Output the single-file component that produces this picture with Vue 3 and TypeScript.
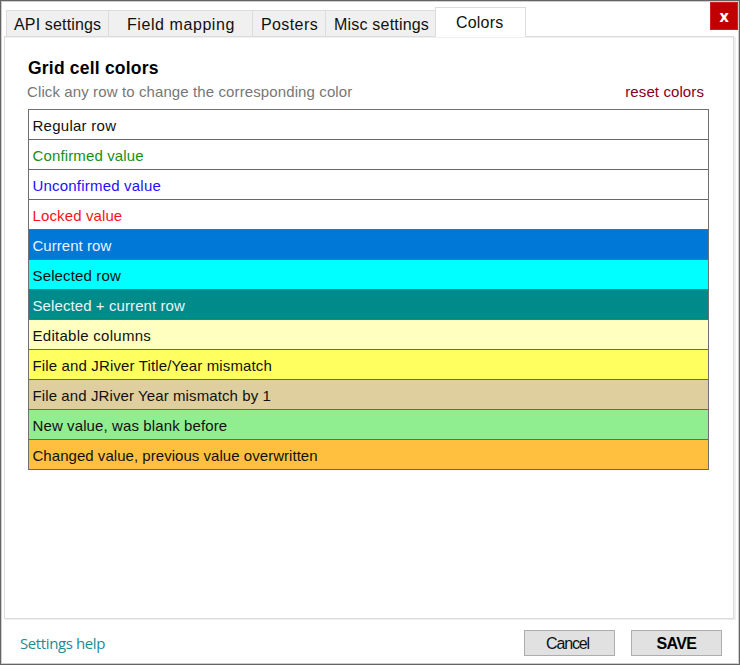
<script setup lang="ts">
import { ref } from 'vue'

interface Tab { id: string; label: string }
interface ColorRow { id: string; label: string }

const tabs: Tab[] = [
  { id: 'api', label: 'API settings' },
  { id: 'fields', label: 'Field mapping' },
  { id: 'posters', label: 'Posters' },
  { id: 'misc', label: 'Misc settings' },
  { id: 'colors', label: 'Colors' },
]
const active = ref('colors')

const rows: ColorRow[] = [
  { id: 'regular', label: 'Regular row' },
  { id: 'confirmed', label: 'Confirmed value' },
  { id: 'unconfirmed', label: 'Unconfirmed value' },
  { id: 'locked', label: 'Locked value' },
  { id: 'current', label: 'Current row' },
  { id: 'selected', label: 'Selected row' },
  { id: 'both', label: 'Selected + current row' },
  { id: 'editable', label: 'Editable columns' },
  { id: 'title', label: 'File and JRiver Title/Year mismatch' },
  { id: 'year', label: 'File and JRiver Year mismatch by 1' },
  { id: 'fresh', label: 'New value, was blank before' },
  { id: 'changed', label: 'Changed value, previous value overwritten' },
]
</script>

<template>
  <div class="window">
    <button class="close" type="button">x</button>
    <nav class="tabs">
      <button
        v-for="tab in tabs"
        :key="tab.id"
        type="button"
        class="tab"
        :class="[tab.id, { active: active === tab.id }]"
        @click="active = tab.id"
      >{{ tab.label }}</button>
    </nav>
    <main class="panel">
      <h1>Grid cell colors</h1>
      <div class="intro">
        <span class="hint">Click any row to change the corresponding color</span>
        <a class="reset">reset colors</a>
      </div>
      <div class="grid">
        <div v-for="row in rows" :key="row.id" class="row" :class="row.id">
          <span>{{ row.label }}</span>
        </div>
      </div>
    </main>
    <footer>
      <a class="help">Settings help</a>
      <button type="button" class="btn cancel">Cancel</button>
      <button type="button" class="btn save">SAVE</button>
    </footer>
  </div>
</template>

<style>
body { margin: 0; background: #fff; }
</style>

<style scoped>
* { box-sizing: border-box; }
button { margin: 0; padding: 0; border: 0; font-family: inherit; }
.window {
  position: relative;
  display: flex;
  flex-direction: column;
  width: 740px;
  height: 665px;
  padding: 6px 5px 0 3px;
  border: 1px solid #646464;
  box-shadow: inset 0 0 0 1px #cfcdcd;
  background: #fff;
  font-family: "Liberation Sans", Arial, sans-serif;
  white-space: nowrap;
}
.close {
  position: absolute;
  top: 1px;
  right: 1px;
  width: 28px;
  height: 28px;
  border: 1px solid #d02020;
  background: #c00000;
  color: #fff;
  font: bold 16px/24px "Open Sans", sans-serif;
}
.tabs {
  display: flex;
  align-items: flex-end;
  flex: none;
  height: 29px;
  padding-left: 2px;
  position: relative;
  z-index: 1;
}
.tab {
  height: 26px;
  border: 1px solid #dcdcdc;
  border-right: 0;
  border-bottom: 0;
  background: #f0f0f0;
  color: #111;
  font-size: 16px;
  line-height: 27px;
  text-align: left;
}
.api { width: 102px; padding-left: 7px; letter-spacing: 0.15px; }
.fields { width: 144px; padding-left: 18px; letter-spacing: 0.57px; }
.posters { width: 73px; padding-left: 8px; letter-spacing: 0.4px; }
.misc { width: 110px; padding-left: 8px; letter-spacing: 0.2px; }
.colors { width: 91px; padding-left: 20px; letter-spacing: 0.2px; }
.tab.active {
  height: 30px;
  margin-bottom: -1px;
  border-right: 1px solid #dcdcdc;
  background: #fff;
  line-height: 27px;
}
.panel {
  flex: none;
  height: 583px;
  padding: 20px 24px 0 23px;
  border: 1px solid #dcdcdc;
  box-shadow: 1px 1px 0 #eee, 2px 1px 0 #f0f0f0, inset 0 1px 0 #f0f0f0;
}
h1 {
  margin: 0;
  height: 22px;
  color: #000;
  font-size: 17.5px;
  letter-spacing: 0.2px;
  line-height: 22px;
}
.intro {
  display: flex;
  justify-content: space-between;
  height: 30px;
  padding-right: 5px;
  font-size: 15px;
  line-height: 25px;
}
.hint { margin-left: -1px; color: #777; letter-spacing: 0.11px; }
.reset { color: #850018; letter-spacing: 0.1px; }
.grid { border: 1px solid #707070; border-bottom: 0; }
.row {
  height: 30px;
  padding-left: 3.5px;
  border-bottom: 1px solid #686868;
  color: #111;
  font-size: 15px;
  line-height: 32px;
}
.regular { letter-spacing: 0.26px; }
.confirmed { color: #159015; letter-spacing: 0.13px; }
.unconfirmed { color: #1c10ff; letter-spacing: 0.2px; }
.locked { color: #ff1018; letter-spacing: 0.12px; }
.current { background: #0078d7; color: #e8f3fc; letter-spacing: 0.04px; }
.selected { background: #00ffff; letter-spacing: 0.14px; }
.both { background: #008b8b; color: #e8f5f4; letter-spacing: 0.09px; }
.editable { background: #ffffc0; letter-spacing: 0.27px; }
.title { background: #ffff60; letter-spacing: 0.14px; }
.year { background: #dfcf9f; letter-spacing: 0.1px; }
.fresh { background: #90ee90; letter-spacing: 0.11px; }
.changed { background: #ffc040; letter-spacing: 0.04px; }
footer {
  display: flex;
  align-items: flex-start;
  padding: 11px 12px 0 16px;
}
.help {
  margin-right: auto;
  padding-top: 1px;
  color: #218c91;
  font: 15px/24px "Open Sans", sans-serif;
  letter-spacing: -0.4px;
}
.btn {
  width: 91px;
  height: 26px;
  border: 1px solid #adadad;
  background: #e1e1e1;
  color: #111;
  font-size: 16px;
  line-height: 25px;
}
.cancel { margin-right: 16px; padding-right: 4px; letter-spacing: -1.15px; }
.save { color: #000; font-weight: bold; letter-spacing: -0.65px; }
</style>
